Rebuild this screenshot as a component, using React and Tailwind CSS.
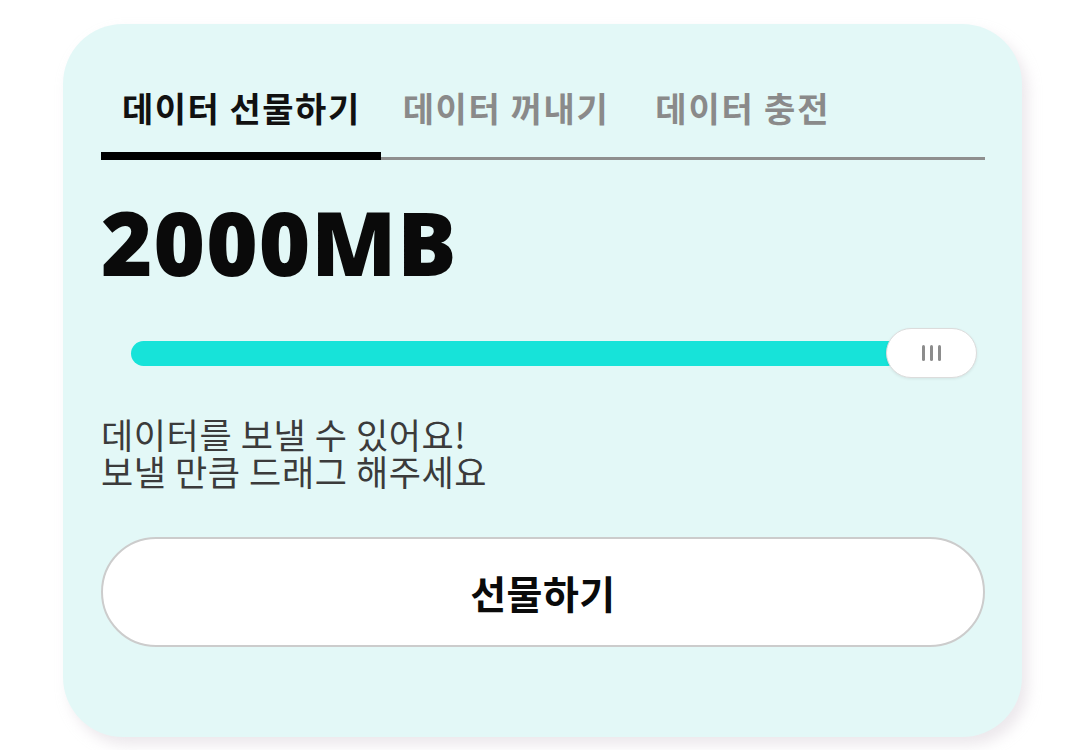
export default function App() {
  const kr = { fontFamily: '"Noto Sans CJK KR", "Noto Sans", sans-serif' };
  return (
    <div className="w-[1085px] h-[750px] bg-white overflow-hidden">
      <div
        className="ml-[63px] mt-[24px] w-[959px] h-[713px] rounded-[60px] bg-[#e3f8f7] shadow-[6px_8px_14px_rgba(200,190,200,0.35)] pl-[38px] pr-[37px] pt-[70px]"
        style={kr}
      >
        {/* Tabs */}
        <div className="flex items-end border-b-[3px] border-[#8f8f8f] h-[66px]">
          <div className="relative pl-[21px] pr-[20px] h-full flex items-start">
            <span className="text-[34px] leading-[28px] font-bold text-[#111] tracking-[1.5px]">데이터 선물하기</span>
            <div className="absolute left-0 right-0 -bottom-[3px] h-[8px] bg-black" />
          </div>
          <div className="px-[22px] h-full flex items-start">
            <span className="text-[34px] leading-[28px] font-bold text-[#8a8a8a] tracking-[1.6px]">데이터 꺼내기</span>
          </div>
          <div className="px-[24px] h-full flex items-start">
            <span className="text-[34px] leading-[28px] font-bold text-[#8a8a8a] tracking-[1.8px]">데이터 충전</span>
          </div>
        </div>

        {/* Amount */}
        <div
          className="mt-[38px] text-[88px] leading-[88px] font-black text-[#0a0a0a] tracking-[1px]"
          style={{ fontFamily: '"Noto Sans", "DejaVu Sans", sans-serif' }}
        >
          2000MB
        </div>

        {/* Slider */}
        <div className="mt-[42px] flex items-center pl-[30px] pr-[8px] h-[50px]">
          <div className="flex-1 h-[25px] rounded-full bg-[#17e3d9]" />
          <div className="-ml-[14px] w-[91px] h-[50px] rounded-full bg-white border border-[#dcdcdc] shadow-[0_1px_3px_rgba(0,0,0,0.08)] flex items-center justify-center gap-[5px]">
            <div className="w-[3px] h-[16px] bg-[#8c8c8c] rounded-sm" />
            <div className="w-[3px] h-[16px] bg-[#8c8c8c] rounded-sm" />
            <div className="w-[3px] h-[16px] bg-[#8c8c8c] rounded-sm" />
          </div>
        </div>

        {/* Description */}
        <div className="mt-[37px] text-[35px] leading-[37px] text-[#3b3b3b] tracking-[0.6px]">
          <div>데이터를 보낼 수 있어요!</div>
          <div>보낼 만큼 드래그 해주세요</div>
        </div>

        {/* Button */}
        <div className="mt-[48px] h-[110px] rounded-full bg-white border-2 border-[#cccccc] flex items-center justify-center">
          <span className="text-[39px] leading-[44px] font-bold text-[#0a0a0a] tracking-[0.5px]">선물하기</span>
        </div>
      </div>
    </div>
  );
}
